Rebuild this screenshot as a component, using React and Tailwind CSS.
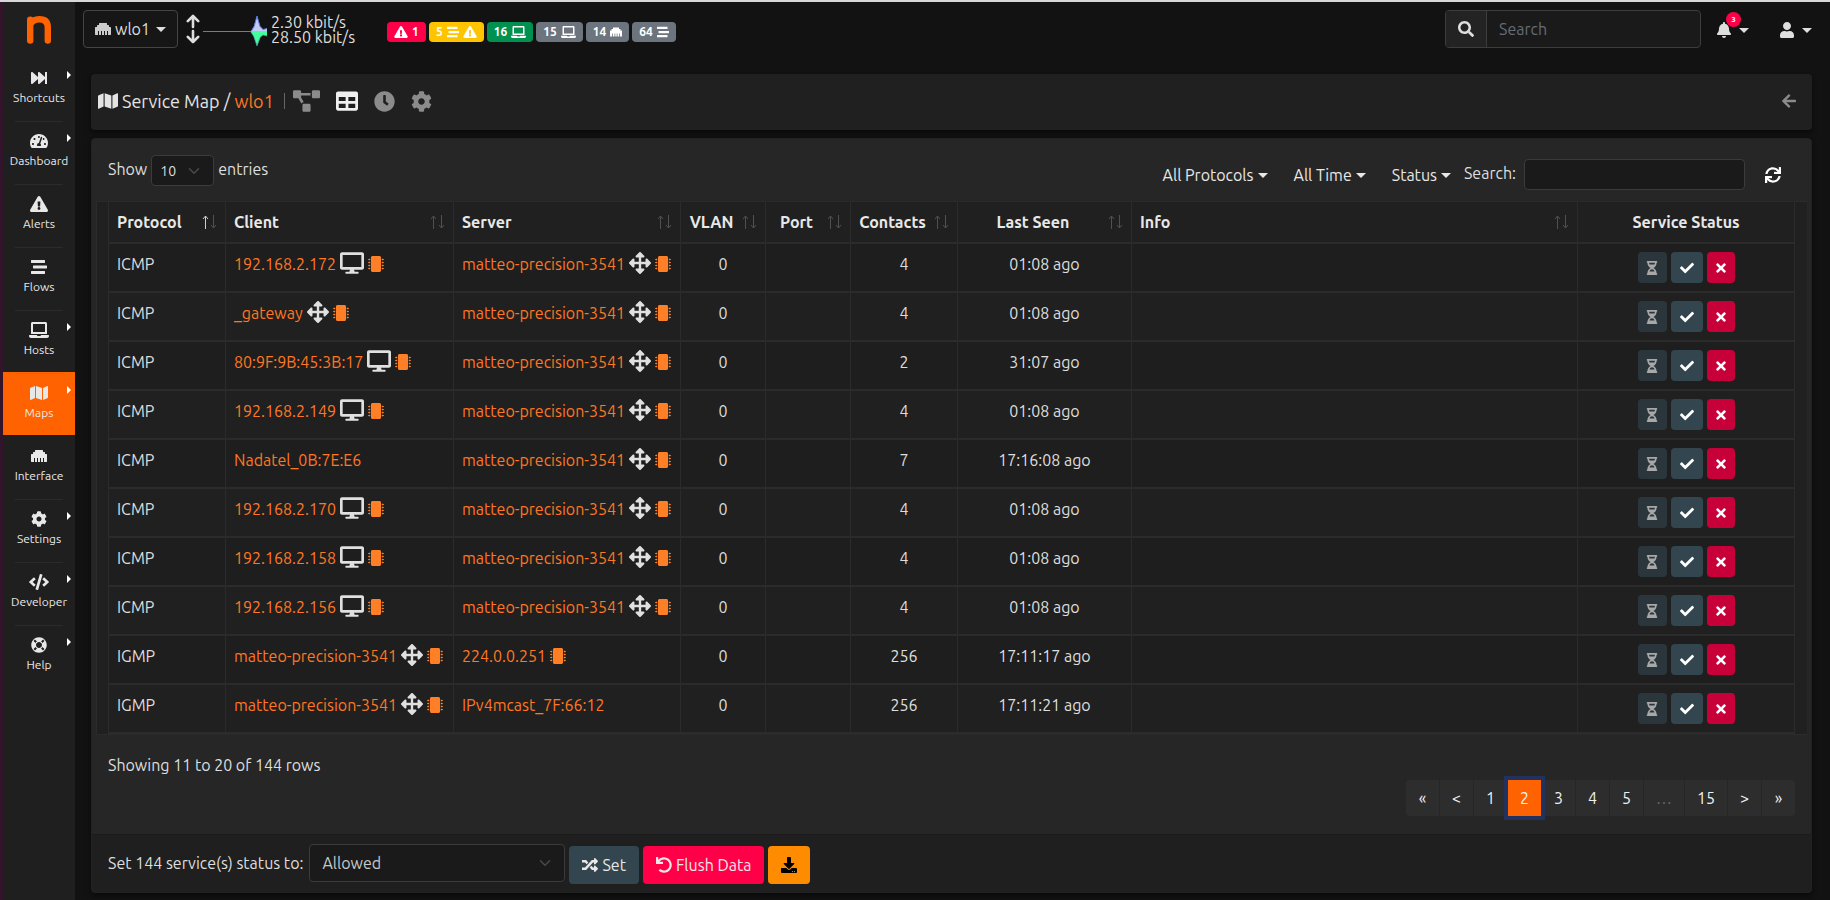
import React from "react";
import {
  FaFastForward, FaTachometerAlt, FaExclamationTriangle, FaStream, FaLaptop, FaMap, FaEthernet, FaCog, FaCode,
  FaLifeRing, FaProjectDiagram, FaTable, FaClock, FaArrowLeft, FaSync, FaDesktop, FaArrowsAlt, FaMicrochip,
  FaHourglassHalf, FaCheck, FaTimes, FaSearch, FaBell, FaUser, FaRandom, FaUndo, FaDownload,
} from "react-icons/fa";

const MENU = [
  ["Shortcuts", FaFastForward, true],
  ["Dashboard", FaTachometerAlt, true],
  ["Alerts", FaExclamationTriangle, false],
  ["Flows", FaStream, false],
  ["Hosts", FaLaptop, true],
  ["Maps", FaMap, true],
  ["Interface", FaEthernet, false],
  ["Settings", FaCog, true],
  ["Developer", FaCode, true],
  ["Help", FaLifeRing, true],
];

const LOCAL = { name: "matteo-precision-3541", kind: "router", chip: true };
const pc = (name) => ({ name, kind: "desktop", chip: true });
const ROWS = [
  ["ICMP", pc("192.168.2.172"), LOCAL, 4, "01:08 ago"],
  ["ICMP", { name: "_gateway", kind: "router", chip: true }, LOCAL, 4, "01:08 ago"],
  ["ICMP", pc("80:9F:9B:45:3B:17"), LOCAL, 2, "31:07 ago"],
  ["ICMP", pc("192.168.2.149"), LOCAL, 4, "01:08 ago"],
  ["ICMP", { name: "Nadatel_0B:7E:E6" }, LOCAL, 7, "17:16:08 ago"],
  ["ICMP", pc("192.168.2.170"), LOCAL, 4, "01:08 ago"],
  ["ICMP", pc("192.168.2.158"), LOCAL, 4, "01:08 ago"],
  ["ICMP", pc("192.168.2.156"), LOCAL, 4, "01:08 ago"],
  ["IGMP", LOCAL, { name: "224.0.0.251", chip: true }, 256, "17:11:17 ago"],
  ["IGMP", LOCAL, { name: "IPv4mcast_7F:66:12" }, 256, "17:11:21 ago"],
];

function Caret() {
  return (
    <svg className="h-[5px] w-[10px] shrink-0" viewBox="0 0 10 5" fill="currentColor" aria-hidden="true">
      <path d="M0 0h10L5 5z" />
    </svg>
  );
}

function Chevron() {
  return (
    <svg className="pointer-events-none absolute top-1/2 right-3.5 h-3 w-3 -translate-y-1/2 text-[#454b50]" viewBox="0 0 16 16" fill="none" stroke="currentColor" strokeWidth="2" strokeLinecap="round" strokeLinejoin="round" aria-hidden="true">
      <path d="M2 5l6 6 6-6" />
    </svg>
  );
}

function Sidebar() {
  return (
    <nav className="w-[75px] shrink-0 border-l-3 border-[#32142b] bg-[#1f1f1f]">
      <a href="#home" aria-label="Home" className="flex h-[55px] items-center justify-center">
        <svg className="h-7 w-6" viewBox="0 0 24 28" fill="none" stroke="#ff6200" strokeWidth="6.4" strokeLinecap="round" aria-hidden="true">
          <path d="M3.2 3.6V24.6M3.6 8C5.500 4.600 8.500 3.300 12.200 3.300C18 3.300 20.800 6.300 20.800 11.500V24.6" />
        </svg>
      </a>
      <ul>
        {MENU.map(([label, Icon, more], i) => (
          <li key={label}>
            <a href={"#" + label} className={"relative flex h-[63px] flex-col items-center pt-[13px] text-xs leading-5 text-[#e8e8e8] " + (label === "Maps" ? "bg-[#ff6200]" : "")}>
              <Icon className="h-4 w-5" />
              <span className="mt-0.5">{label}</span>
              {more && (
                <svg className="absolute top-3.5 right-1 h-2 w-1" viewBox="0 0 4 8" fill="#fff" aria-hidden="true"><path d="M0 0l4 4-4 4z" /></svg>
              )}
              {i > 0 && label !== "Interface" && (
                <span className={"absolute top-px left-3 h-px w-12 " + (label === "Maps" ? "bg-[#ea6008]" : "bg-[#2b2b2b]")} />
              )}
            </a>
          </li>
        ))}
      </ul>
    </nav>
  );
}

function Badge({ tone, children }) {
  return <a href="#status" className={"flex h-5 items-center gap-1 rounded px-[7px] text-xs font-bold text-white " + tone}>{children}</a>;
}

function TopBar() {
  return (
    <header className="flex h-[62px] items-start pt-2 pr-4 pl-2 text-[#dedede]">
      <button className="flex h-[38px] items-center gap-1 rounded border border-[#444] bg-[#161616] px-[11px]">
        <FaEthernet className="h-4 w-4 text-[#ccc]" />
        <span>wlo1</span>
        <span className="ml-0.5"><Caret /></span>
      </button>
      <svg className="mt-1 ml-2 h-[30px] w-[14px]" viewBox="0 0 14 30" fill="none" stroke="#dedede" strokeWidth="2.600" strokeLinecap="round" strokeLinejoin="round" aria-hidden="true">
        <path d="M7 2v11M1.800 7.200L7 2l5.200 5.200M7 17v11M1.800 22.800L7 28l5.200-5.200" />
      </svg>
      <svg className="mt-1 ml-[3px] h-8 w-16" viewBox="0 0 64 32" aria-hidden="true">
        <path d="M48 17L51 12L54 2L57 12L60 15.500L64 14.500V17z" fill="#c1ccf5" />
        <path d="M47 17H64V22L60 21L57.500 23L54 32L50.500 22z" fill="#45ff9c" />
        <path d="M0 17.500H48L51 13L54 2L57 12.500L60 15.500L64 14.500" fill="none" stroke="#5a78e0" />
        <path d="M48 18L51 23L54 32L57 23.500L60 21L64 22" fill="none" stroke="#4a9bb0" strokeWidth="0.700" />
      </svg>
      <div className="mt-[5px] ml-1 leading-[15px]">
        <div>2.30 kbit/s</div>
        <div>28.50 kbit/s</div>
      </div>
      <div className="mt-3 ml-8 flex gap-[3px]">
        <Badge tone="bg-[#ff0048]"><FaExclamationTriangle className="h-3 w-3.5" />1</Badge>
        <Badge tone="bg-[#ffc400]">5<FaStream className="h-3 w-3" /><FaExclamationTriangle className="h-3 w-3.5" /></Badge>
        <Badge tone="bg-[#009150]">16<FaLaptop className="h-3 w-[15px]" /></Badge>
        <Badge tone="bg-[#6c757d]">15<FaLaptop className="h-3 w-[15px]" /></Badge>
        <Badge tone="bg-[#6c757d]">14<FaEthernet className="h-3 w-3" /></Badge>
        <Badge tone="bg-[#6c757d]">64<FaStream className="h-3 w-3" /></Badge>
      </div>
      <form className="ml-auto flex h-[38px] w-64 overflow-hidden rounded border border-[#3d3d3d] bg-[#1a1a1a]">
        <button type="button" aria-label="Search" className="flex w-[41px] shrink-0 items-center justify-center border-r border-[#3d3d3d] bg-[#232323]">
          <FaSearch className="h-4 w-4" />
        </button>
        <input aria-label="Search" placeholder="Search" className="w-full bg-transparent px-3 outline-none placeholder:text-[#646d75]" />
      </form>
      <button aria-label="Notifications" className="relative mt-3 ml-4 flex h-4 items-center gap-2">
        <FaBell className="h-4 w-3.5" />
        <Caret />
        <span className="absolute -top-2.5 left-[9px] flex h-[15px] w-[15px] items-center justify-center rounded-full bg-[#ff0048] text-[8px] font-bold text-white">3</span>
      </button>
      <button aria-label="User" className="mt-3 mr-0.5 ml-[31px] flex h-4 items-center gap-2">
        <FaUser className="h-4 w-3.5" />
        <Caret />
      </button>
    </header>
  );
}

function PageHeader() {
  return (
    <div className="mt-2.5 flex h-14 items-center rounded bg-[#202020] pr-4 pb-0.5 pl-[7px] shadow-md shadow-black/40">
      <FaMap className="h-[18px] w-5 text-[#e4e4e4]" />
      <h1 className="ml-1 text-lg leading-6 text-[#e4e4e4]">Service Map / <a href="#wlo1" className="text-[#ff7722]">wlo1</a></h1>
      <span className="ml-2.5 h-4 w-px bg-[#666]" />
      <div className="ml-2 flex items-center gap-4 text-[#8b8b8b]">
        <a href="#graph" aria-label="Graph"><FaProjectDiagram className="h-[22px] w-[27px]" /></a>
        <a href="#table" aria-label="Table" className="text-[#f0f0f0]"><FaTable className="h-[22px] w-[22px]" /></a>
        <a href="#period" aria-label="Period"><FaClock className="h-[21px] w-[21px]" /></a>
        <a href="#settings" aria-label="Settings"><FaCog className="h-[21px] w-[21px]" /></a>
      </div>
      <a href="#back" aria-label="Back" className="ml-auto text-[#8b8b8b]"><FaArrowLeft className="h-4 w-3.5" /></a>
    </div>
  );
}

function Filter({ children }) {
  return <button className="flex items-center gap-1 text-[#e8e8e8]">{children}<Caret /></button>;
}

function Sort({ active }) {
  return (
    <svg className="ml-auto h-3.5 w-[15px] shrink-0 text-[#505050]" viewBox="0 0 15 14" fill="none" stroke="currentColor" aria-hidden="true">
      <path d="M3.500 14V1M1 4l2.500-3L6 4" stroke={active ? "#d0d0c0" : "currentColor"} />
      <path d="M11.500 0v13M9 10l2.500 3L14 10" />
    </svg>
  );
}

const COLUMNS = [
  ["Protocol", "w-[117px]", "left"],
  ["Client", "w-[228px]", "left"],
  ["Server", "w-[227px]", "left"],
  ["VLAN", "w-[85px]", "center"],
  ["Port", "w-[85px]", "center"],
  ["Contacts", "w-[107px]", "center"],
  ["Last Seen", "w-[174px]", "center"],
  ["Info", "", "left"],
  ["Service Status", "w-[217px]", "none"],
];
const TITLE_ALIGN = { left: "", center: "flex-1 pr-2 text-center", none: "flex-1 text-center" };

function Host({ host }) {
  return (
    <div className="flex h-6 items-start gap-1 whitespace-nowrap text-[#ff7f27]">
      <a href={"#" + host.name} className="text-[#ff7722]">{host.name}</a>
      {host.kind === "desktop" && <FaDesktop className="h-[22px] w-6 text-[#e0e0e0]" />}
      {host.kind === "router" && <FaArrowsAlt className="h-[22px] w-[22px] text-[#e0e0e0]" />}
      {host.chip && <FaMicrochip className="mt-1 h-4 w-4" />}
    </div>
  );
}

function ServiceTable() {
  const cell = "border-r border-b-2 border-[#2b2b2b] p-2 align-top";
  return (
    <div className="mx-1 border-y border-l border-[#2b2b2b] bg-[#202020] pr-3 pl-[11px]">
      <table className="w-full table-fixed border-separate border-spacing-0 border-l border-[#2b2b2b] text-[#dedede]">
        <thead>
          <tr>
            {COLUMNS.map(([name, width, align]) => (
              <th key={name} scope="col" className={"h-[42px] border-r border-b-2 border-[#2b2b2b] px-2 font-bold text-[#e8e8e8] " + width}>
                <div className="flex items-center">
                  <span className={TITLE_ALIGN[align]}>{name}</span>
                  {align !== "none" && <Sort active={name === "Protocol"} />}
                </div>
              </th>
            ))}
          </tr>
        </thead>
        <tbody>
          {ROWS.map(([proto, client, server, contacts, seen], i) => (
            <tr key={i} className={i % 2 ? "bg-[#202020]" : "bg-[#1e1e1e]"}>
              <td className={cell}>{proto}</td>
              <td className={cell}><Host host={client} /></td>
              <td className={cell}><Host host={server} /></td>
              <td className={cell + " text-center"}>0</td>
              <td className={cell} />
              <td className={cell + " text-center"}>{contacts}</td>
              <td className={cell + " text-center"}>{seen}</td>
              <td className={cell} />
              <td className={cell}>
                <div className="flex justify-center gap-1">
                  <button aria-label="Undecided" className="flex h-[31px] w-[29px] items-center justify-center rounded bg-[#2b363c] text-[#a8a8a8]"><FaHourglassHalf className="h-3.5 w-3.5" /></button>
                  <button aria-label="Allow" className="flex h-[31px] w-8 items-center justify-center rounded bg-[#33454e] text-white"><FaCheck className="h-3.5 w-3.5" /></button>
                  <button aria-label="Deny" className="flex h-[31px] w-7 items-center justify-center rounded bg-[#c70039] text-white"><FaTimes className="h-3.5 w-3.5" /></button>
                </div>
              </td>
            </tr>
          ))}
        </tbody>
      </table>
    </div>
  );
}

function Pagination() {
  return (
    <div className="mt-[3px] flex justify-end">
      <div className="flex gap-px text-[#f0f0f0]">
        {["«", "<", "1", "2", "3", "4", "5", "…", "15", ">", "»"].map((p) => (
          <button
            key={p}
            disabled={p === "…"}
            className={
              "h-9 text-center first:rounded-l last:rounded-r " +
              (p === "2" ? "relative bg-[#ff6200] ring-4 ring-[#20325d] " : "bg-[#2d2d2d] ") +
              (p === "15" ? "w-[42px] " : p === "…" ? "w-10 text-[#666]" : "w-[33px]")
            }
          >
            {p}
          </button>
        ))}
      </div>
    </div>
  );
}

export default function App() {
  return (
    <div className="flex min-h-screen border-t-2 border-[#d8d8d8] bg-[#121212] font-['Ubuntu','Noto_Sans',sans-serif] text-base leading-6">
      <Sidebar />
      <div className="min-w-0 flex-1">
        <TopBar />
        <main className="mr-[18px] ml-4">
          <PageHeader />
          <section className="mt-2 rounded border border-[#222] bg-[#262626] text-[#dedede] shadow-md shadow-black/40">
            <div className="flex h-[62px] items-start pr-[30px] pl-4">
              <label className="mt-4 flex items-start gap-1">
                <span className="mt-0.5">Show</span>
                <span className="relative">
                  <select className="block h-[31px] w-[63px] appearance-none rounded border border-[#3b3b3b] bg-[#1a1a1a] pl-2 text-sm">
                    <option>10</option>
                  </select>
                  <Chevron />
                </span>
                <span className="mt-0.5">entries</span>
              </label>
              <div className="mt-6 mr-[26px] ml-auto flex gap-[26px]">
                <Filter>All Protocols</Filter>
                <Filter>All Time</Filter>
              </div>
              <div className="mt-6 mr-[13px] flex">
                <Filter>Status</Filter>
              </div>
              <label className="mt-5 flex items-start gap-2">
                <span className="mt-0.5">Search:</span>
                <input className="h-[31px] w-[221px] rounded border border-[#3b3b3b] bg-[#1a1a1a] px-2 outline-none" />
              </label>
              <button aria-label="Refresh" className="mt-7 ml-5 text-white"><FaSync className="h-4 w-4" /></button>
            </div>
            <ServiceTable />
            <div className="pt-[18px] pr-4 pb-[18px] pl-4">
              <p>Showing 11 to 20 of 144 rows</p>
              <Pagination />
            </div>
            <footer className="flex h-[58px] items-start gap-1 rounded-b border-t border-[#1a1a1a] bg-[#1f1f1f] pt-[9px] pl-4">
              <label htmlFor="status" className="mt-[7px] mr-0.5">Set 144 service(s) status to:</label>
              <span className="relative">
                <select id="status" className="block h-[38px] w-64 appearance-none rounded border border-[#3b3b3b] bg-[#1a1a1a] pl-3 text-[#c8c8c8]">
                  <option>Allowed</option>
                </select>
                <Chevron />
              </span>
              <button className="mt-0.5 flex h-[38px] items-center gap-1 rounded bg-[#33454e] px-[13px] text-[#e8e8e8]"><FaRandom className="h-4 w-4" />Set</button>
              <button className="mt-0.5 flex h-[38px] items-center gap-1 rounded bg-[#ff0048] px-[13px] text-[#f0e8e8]"><FaUndo className="h-4 w-4" />Flush Data</button>
              <button aria-label="Download" className="mt-0.5 flex h-[38px] w-[42px] items-center justify-center rounded bg-[#ff8c00] text-black"><FaDownload className="h-4 w-4" /></button>
            </footer>
          </section>
        </main>
      </div>
    </div>
  );
}
